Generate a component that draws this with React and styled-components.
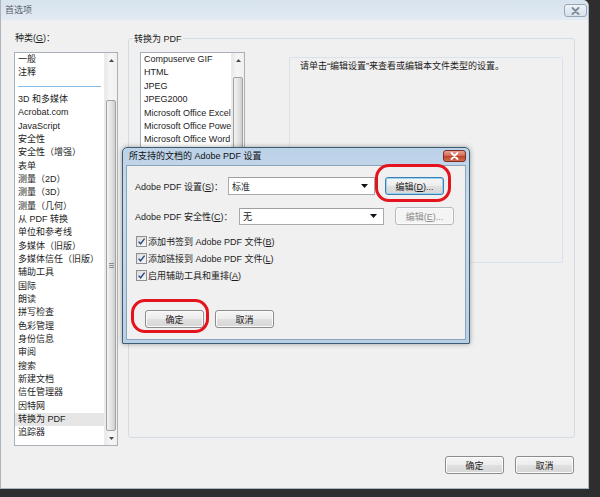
import React from 'react';
import styled, { createGlobalStyle } from 'styled-components';

const GlobalStyle = createGlobalStyle`
  html, body {
    margin: 0;
    padding: 0;
    background: #2e2e2e;
  }
  body {
    font-family: "Liberation Sans", "Noto Sans CJK SC", sans-serif;
    font-size: 9px;
    color: #1c1c1c;
  }
  * { box-sizing: border-box; }
  u { text-decoration: underline; text-underline-offset: 1px; }
`;

const categories = [
  '3D 和多媒体', 'Acrobat.com', 'JavaScript', '安全性', '安全性（增强）', '表单',
  '测量（2D）', '测量（3D）', '测量（几何）', '从 PDF 转换', '单位和参考线',
  '多媒体（旧版）', '多媒体信任（旧版）', '辅助工具', '国际', '朗读', '拼写检查',
  '色彩管理', '身份信息', '审阅', '搜索', '新建文档', '信任管理器', '因特网',
  '转换为 PDF', '追踪器',
];

const fileTypes = [
  'Compuserve GIF', 'HTML', 'JPEG', 'JPEG2000', 'Microsoft Office Excel',
  'Microsoft Office PowerPoint', 'Microsoft Office Word', 'Microsoft Office Publisher',
  'Microsoft Visio', 'PCX', 'PNG', 'PostScript/EPS', 'RTF', 'Text',
];

const XIcon = ({ color }) => (
  <svg width="9" height="8" viewBox="0 0 9 8">
    <path d="M1.5 1 L7.5 7 M7.5 1 L1.5 7" stroke={color} strokeWidth="1.8" strokeLinecap="round" />
  </svg>
);

const Tri = ({ up, color = '#4a4a4a', w = 5, h = 3 }) => (
  <svg width={w} height={h} viewBox={`0 0 ${w} ${h}`}>
    {up
      ? <polygon points={`0,${h} ${w},${h} ${w / 2},0`} fill={color} />
      : <polygon points={`0,0 ${w},0 ${w / 2},${h}`} fill={color} />}
  </svg>
);

const ScrollBar = ({ top, size }) => (
  <Scroll>
    <ScrollArrow><Tri up /></ScrollArrow>
    <Track>
      <Thumb $top={top} $size={size}><Grip /></Thumb>
    </Track>
    <ScrollArrow><Tri /></ScrollArrow>
  </Scroll>
);

const CheckMark = () => (
  <svg width="9" height="9" viewBox="0 0 9 9">
    <path d="M1.6 4.6 L3.6 6.8 L7.6 1.6" fill="none" stroke="#2a4a8a" strokeWidth="1.4" />
  </svg>
);

const App = () => (
  <>
    <GlobalStyle />
    <Window>
      <TitleBar>
        <WinTitle>首选项</WinTitle>
        <GhostClose><XIcon color="#7d8a98" /></GhostClose>
      </TitleBar>

      <Body>
        <LeftCol>
          <FieldLabel>种类(<u>G</u>)：</FieldLabel>
          <ListBox $h={394}>
            <Items>
              <Item>一般</Item>
              <Item>注释</Item>
              <Separator />
              {categories.map((c) => (
                <Item key={c} $selected={c === '转换为 PDF'}>{c}</Item>
              ))}
            </Items>
            <ScrollBar top={33} size={331} />
          </ListBox>
        </LeftCol>

        <RightCol>
          <GroupBox>
            <Legend>转换为 PDF</Legend>
            <GroupInner>
              <ListBox $h={211} $w={105}>
                <Items>
                  {fileTypes.map((f) => <FileItem key={f}>{f}</FileItem>)}
                </Items>
                <ScrollBar top={10} size={170} />
              </ListBox>
              <InfoPanel>请单击“编辑设置”来查看或编辑本文件类型的设置。</InfoPanel>
            </GroupInner>
          </GroupBox>
          <ButtonRow>
            <Button>确定</Button>
            <Button>取消</Button>
          </ButtonRow>
        </RightCol>
      </Body>

      <Dialog>
        <DialogTitleBar>
          <DialogTitle>所支持的文档的 Adobe PDF 设置</DialogTitle>
          <RedClose><XIcon color="#ffffff" /></RedClose>
        </DialogTitleBar>
        <DialogBody>
          <FormRow>
            <RowLabel $w={93}>Adobe PDF 设置(<u>S</u>)：</RowLabel>
            <Select $w={147}>
              <SelectText>标准</SelectText>
              <DropBtn><Tri w={7} h={4} color="#111" /></DropBtn>
            </Select>
            <Button $focused $ml={10}>编辑(<u>D</u>)...</Button>
          </FormRow>
          <FormRow $mt={12}>
            <RowLabel $w={104}>Adobe PDF 安全性(<u>C</u>)：</RowLabel>
            <Select $w={145}>
              <SelectText>无</SelectText>
              <DropBtn><Tri w={7} h={4} color="#111" /></DropBtn>
            </Select>
            <Button disabled $ml={11}>编辑(<u>E</u>)...</Button>
          </FormRow>
          <Checks>
            <CheckRow><Box><CheckMark /></Box>添加书签到 Adobe PDF 文件(<u>B</u>)</CheckRow>
            <CheckRow><Box><CheckMark /></Box>添加链接到 Adobe PDF 文件(<u>L</u>)</CheckRow>
            <CheckRow><Box><CheckMark /></Box>启用辅助工具和重排(<u>A</u>)</CheckRow>
          </Checks>
          <DialogButtons>
            <Button>确定</Button>
            <Button>取消</Button>
          </DialogButtons>
        </DialogBody>
      </Dialog>

      <Annotation $x={374} $y={164} $w={76} $h={38} />
      <Annotation $x={130} $y={299} $w={78} $h={34} />
    </Window>
  </>
);

export default App;

const Window = styled.div`
  position: relative;
  width: 589px;
  height: 489px;
  background: #f0f0f0;
  border: 1px solid #aab5c0;
  border-top: none;
  border-radius: 0 6px 0 0;
  overflow: hidden;
`;

const TitleBar = styled.div`
  height: 20px;
  display: flex;
  align-items: flex-start;
  justify-content: space-between;
  padding: 0 1px 0 4px;
  background: linear-gradient(#d7e3ee, #e2eaf3);
`;

const WinTitle = styled.div`
  line-height: 20px;
  color: #56606b;
`;

const GhostClose = styled.div`
  width: 23px;
  height: 13px;
  margin-top: 4px;
  display: flex;
  align-items: center;
  justify-content: center;
  border: 1px solid #97a6b6;
  border-radius: 3px;
  background: linear-gradient(#eef3f8, #d6e0ea);
`;

const Body = styled.div`
  display: grid;
  grid-template-columns: 104px 447px;
  column-gap: 10px;
  padding: 11px 0 0 13px;
`;

const LeftCol = styled.div`
  display: flex;
  flex-direction: column;
`;

const FieldLabel = styled.div`
  line-height: 14px;
  height: 14px;
  margin-bottom: 7px;
  padding-left: 1px;
`;

const ListBox = styled.div`
  display: flex;
  width: ${(p) => p.$w || 104}px;
  height: ${(p) => p.$h}px;
  background: #fff;
  border: 1px solid #a9b0b8;
`;

const Items = styled.div`
  flex: 1;
  min-width: 0;
  overflow: hidden;
`;

const Item = styled.div`
  height: 13.33px;
  line-height: 13.33px;
  padding-left: 3px;
  white-space: nowrap;
  background: ${(p) => (p.$selected ? '#e6e6e6' : 'transparent')};
`;

const FileItem = styled(Item)`
  height: 13.4px;
  line-height: 13.4px;
`;

const Separator = styled.div`
  height: 13.33px;
  display: flex;
  align-items: center;
  padding: 0 3px;

  &::after {
    content: '';
    flex: 1;
    height: 1px;
    background: #86bde8;
  }
`;

const Scroll = styled.div`
  width: 13px;
  display: flex;
  flex-direction: column;
  background: linear-gradient(90deg, #e9e9e9, #f5f5f5 40%, #f1f1f1);
  border-left: 1px solid #ececec;
`;

const ScrollArrow = styled.div`
  height: 14px;
  display: flex;
  align-items: center;
  justify-content: center;
`;

const Track = styled.div`
  flex: 1;
  min-height: 0;
  overflow: hidden;
  padding-top: ${(p) => p.$top}px;
`;

const Thumb = styled.div`
  margin-top: ${(p) => p.$top}px;
  height: ${(p) => p.$size}px;
  margin-left: 1px;
  width: 10px;
  border: 1px solid #a2a2a2;
  border-radius: 2px;
  background: linear-gradient(90deg, #f3f3f3, #e2e2e2 55%, #cfcfcf);
  display: flex;
  align-items: center;
  justify-content: center;
`;

const Grip = styled.div`
  width: 5px;
  height: 5px;
  border-top: 1px solid #8c8c8c;
  border-bottom: 1px solid #8c8c8c;
  position: relative;

  &::after {
    content: '';
    position: absolute;
    left: 0;
    right: 0;
    top: 1px;
    height: 1px;
    background: #8c8c8c;
  }
`;

const RightCol = styled.div`
  display: flex;
  flex-direction: column;
`;

const GroupBox = styled.div`
  margin-top: 7px;
  height: 400px;
  border: 1px solid #d3dce4;
  border-radius: 3px;
`;

const Legend = styled.div`
  width: fit-content;
  margin: -7px 0 0 4px;
  padding: 0 1px;
  line-height: 14px;
  background: #f0f0f0;
`;

const GroupInner = styled.div`
  display: flex;
  align-items: flex-start;
  gap: 44px;
  padding: 6px 11px 0 11px;
`;

const InfoPanel = styled.div`
  margin-top: 5px;
  width: 274px;
  height: 206px;
  border: 1px solid #d9e2ea;
  border-radius: 2px;
  padding: 1px 0 0 10px;
  line-height: 14px;
`;

const ButtonRow = styled.div`
  display: flex;
  justify-content: flex-end;
  gap: 11px;
  margin-top: 18px;
  padding-right: 1px;
`;

const Button = styled.button`
  width: 59px;
  height: 18px;
  padding: 0;
  margin-left: ${(p) => p.$ml || 0}px;
  font: inherit;
  color: ${(p) => (p.disabled ? '#8e8e8e' : '#1c1c1c')};
  border: 1px solid ${(p) => (p.$focused ? '#3c7fb1' : p.disabled ? '#b5b9bc' : '#8c8c8c')};
  border-radius: 3px;
  background: ${(p) => (p.disabled
    ? '#f4f4f4'
    : 'linear-gradient(#f6f6f6 0%, #ececec 50%, #e0e0e0 51%, #d6d6d6 100%)')};
  box-shadow: ${(p) => (p.$focused ? 'inset 0 0 0 1px #98d3f2' : 'inset 0 0 0 1px #fbfbfb')};
`;

const Dialog = styled.div`
  position: absolute;
  left: 121px;
  top: 147px;
  width: 348px;
  height: 197px;
  display: flex;
  flex-direction: column;
  padding: 0 3px 3px;
  border: 1px solid #3d5c72;
  border-radius: 5px 5px 1px 1px;
  background: linear-gradient(#bcd2e8, #c9dcee 30%, #b7d0e7);
  box-shadow: 0 0 5px rgba(0, 0, 0, 0.35);
`;

const DialogTitleBar = styled.div`
  height: 17px;
  display: flex;
  align-items: flex-start;
  justify-content: space-between;
`;

const DialogTitle = styled.div`
  line-height: 17px;
  padding-left: 3px;
  color: #111;
`;

const RedClose = styled.div`
  width: 23px;
  height: 12px;
  margin-top: 2px;
  display: flex;
  align-items: center;
  justify-content: center;
  border: 1px solid #7b2d22;
  border-radius: 3px;
  background: linear-gradient(#e8a496 0%, #d46a55 45%, #c2432c 55%, #d36c50 100%);
`;

const DialogBody = styled.div`
  flex: 1;
  background: #f0f0f0;
  border: 1px solid #8da5b9;
  padding: 11px 0 0 8px;
`;

const FormRow = styled.div`
  display: flex;
  align-items: center;
  height: 18px;
  margin-top: ${(p) => p.$mt || 0}px;
`;

const RowLabel = styled.div`
  width: ${(p) => p.$w}px;
  flex: none;
  white-space: nowrap;
`;

const Select = styled.div`
  width: ${(p) => p.$w}px;
  height: ${(p) => (p.$w > 146 ? 18 : 17)}px;
  display: flex;
  align-items: center;
  background: #fff;
  border: 1px solid #a6a9ae;
  border-top-color: #9c9fa4;
`;

const SelectText = styled.div`
  flex: 1;
  padding-left: 3px;
`;

const DropBtn = styled.div`
  width: 13px;
  display: flex;
  align-items: center;
  justify-content: flex-start;
`;

const Checks = styled.div`
  margin-top: 8px;
  display: flex;
  flex-direction: column;
`;

const CheckRow = styled.div`
  height: 17px;
  display: flex;
  align-items: center;
  padding-left: 1px;
`;

const Box = styled.div`
  width: 11px;
  height: 11px;
  margin-right: 1px;
  display: flex;
  align-items: center;
  justify-content: center;
  border: 1px solid #8f8f8f;
  background: linear-gradient(135deg, #dcdcdc, #f6f6f6);
`;

const DialogButtons = styled.div`
  display: flex;
  gap: 11px;
  margin: 26px 0 0 10px;
`;

const Annotation = styled.div`
  position: absolute;
  left: ${(p) => p.$x}px;
  top: ${(p) => p.$y}px;
  width: ${(p) => p.$w}px;
  height: ${(p) => p.$h}px;
  border: 3px solid #e3141d;
  border-radius: 14px;
  pointer-events: none;
`;
